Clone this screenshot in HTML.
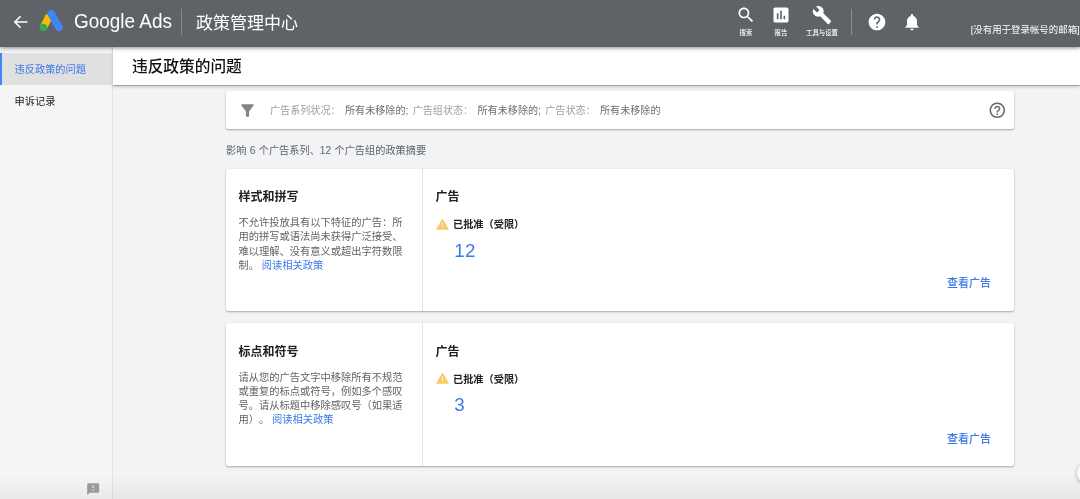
<!DOCTYPE html>
<html lang="zh-CN">
<head>
<meta charset="utf-8">
<title>政策管理中心</title>
<style>
*{box-sizing:border-box;margin:0;padding:0}
html,body{width:1080px;height:499px;overflow:hidden}
body{position:relative;text-spacing-trim:space-all;background:#f1f3f4;font-family:"Liberation Sans","Noto Sans CJK SC",sans-serif;color:#202124}
.abs{position:absolute}
#hdr{left:0;top:0;width:1080px;height:47px;background:#5f6368;box-shadow:0 1px 4px rgba(0,0,0,.45);z-index:10}
#hdr .t{position:absolute;color:#fff;white-space:nowrap}
#side{left:0;top:46px;width:113px;height:453px;background:#f5f5f5;border-right:1px solid #e0e0e0;z-index:2}
#side .act{position:absolute;left:0;top:7px;width:112px;height:32px;background:#e0e0e0;border-left:2px solid #4285f4}
#side .it{position:absolute;left:14.6px;font-size:10.2px;white-space:nowrap}
#titlebar{left:113px;top:47px;width:967px;height:38px;background:#fff;box-shadow:0 1px 0 rgba(0,0,0,.22),0 2px 3px rgba(0,0,0,.18);z-index:3}
#titlebar .t{position:absolute;left:19px;top:7px;font-size:15.7px;font-weight:500;color:#111;white-space:nowrap}
.card{position:absolute;background:#fff;border-radius:2px;box-shadow:0 1px 2px rgba(0,0,0,.3),0 0 1px rgba(0,0,0,.15)}
.txt{position:absolute;white-space:nowrap}
.lab{top:28.8px;font-size:6.4px;line-height:8px;text-align:center;font-weight:500}
.card .div{position:absolute;left:196px;top:0;width:1px;height:100%;background:#e4e4e4}
.card .h{position:absolute;top:20.5px;font-size:12px;line-height:16px;font-weight:700;color:#202124;white-space:nowrap}
.card .desc{position:absolute;left:12.5px;top:47.6px;font-size:10.25px;line-height:14.2px;color:#5f6368;white-space:nowrap}
.card .desc a,.lnk{color:#3b78e7;text-decoration:none}
.card .st{position:absolute;left:227px;top:49.6px;font-size:10.2px;line-height:14px;font-weight:700;color:#202124;white-space:nowrap}
.card .num{position:absolute;left:228.2px;top:71px;font-size:18.7px;letter-spacing:.4px;line-height:22px;color:#3b78e7;white-space:nowrap}
.card .view{position:absolute;left:721px;top:107px;font-size:11px;line-height:16px;font-weight:500;color:#3b78e7;white-space:nowrap}
.card .warn{position:absolute;left:210px;top:49.3px}
</style>
</head>
<body>
<div id="root" style="position:absolute;left:0;top:0;width:1080px;height:499px;will-change:transform">
<div id="hdr" class="abs">
  <svg class="abs" style="left:13px;top:13px" width="16" height="18" viewBox="0 0 16 18"><path d="M14.5 9H2.2M7.6 3.2L1.8 9l5.8 5.8" fill="none" stroke="#fff" stroke-width="1.6"/></svg>
  <svg class="abs" style="left:38px;top:9px" width="26" height="24" viewBox="0 0 26 24">
    <path d="M11.5 6.8L5.3 18.5" stroke="#fbbc04" stroke-width="7.5" stroke-linecap="butt" fill="none"/>
    <path d="M13.2 4.7L21 18.5" stroke="#4285f4" stroke-width="7.5" stroke-linecap="round" fill="none"/>
    <circle cx="5.3" cy="18.5" r="3.75" fill="#34a853"/>
  </svg>
  <div class="t" style="left:74px;top:9px;font-size:21px;transform-origin:0 50%;transform:scaleX(.902)">Google Ads</div>
  <div class="abs" style="left:181px;top:9px;width:1px;height:26px;background:#85888c"></div>
  <div class="t" style="left:196px;top:9px;font-size:17px">政策管理中心</div>

  <svg class="abs" style="left:736px;top:5.4px" width="20" height="20" viewBox="0 0 24 24"><path fill="#fff" d="M15.5 14h-.79l-.28-.27C15.41 12.59 16 11.11 16 9.5 16 5.91 13.09 3 9.5 3S3 5.91 3 9.5 5.91 16 9.5 16c1.61 0 3.09-.59 4.23-1.57l.27.28v.79l5 4.99L20.49 19l-4.99-5zm-6 0C7.01 14 5 11.99 5 9.5S7.01 5 9.5 5 14 7.01 14 9.5 11.99 14 9.5 14z"/></svg>
  <div class="t lab" style="left:726px;width:40px">搜索</div>
  <svg class="abs" style="left:771px;top:5px" width="20" height="20" viewBox="0 0 24 24"><path fill="#fff" d="M19 3H5c-1.1 0-2 .9-2 2v14c0 1.1.9 2 2 2h14c1.1 0 2-.9 2-2V5c0-1.1-.9-2-2-2zM9 17H7v-7h2v7zm4 0h-2V7h2v10zm4 0h-2v-4h2v4z"/></svg>
  <div class="t lab" style="left:761px;width:40px">报告</div>
  <svg class="abs" style="left:812px;top:5px" width="20" height="20" viewBox="0 0 24 24"><path fill="#fff" d="M22.7 19l-9.1-9.1c.9-2.3.4-5-1.5-6.9-2-2-5-2.4-7.4-1.3L9 6 6 9 1.6 4.7C.4 7.1.9 10.1 2.9 12.1c1.9 1.9 4.6 2.4 6.9 1.5l9.1 9.1c.4.4 1 .4 1.4 0l2.3-2.3c.5-.4.5-1.1.1-1.4z"/></svg>
  <div class="t lab" style="left:797px;width:50px">工具与设置</div>
  <div class="abs" style="left:851px;top:9px;width:1px;height:26px;background:#8b8e92"></div>
  <svg class="abs" style="left:867px;top:12px" width="20" height="20" viewBox="0 0 24 24"><path fill="#fff" d="M12 2C6.48 2 2 6.48 2 12s4.48 10 10 10 10-4.48 10-10S17.52 2 12 2zm1 17h-2v-2h2v2zm2.07-7.750l-.9.92C13.45 12.9 13 13.5 13 15h-2v-.5c0-1.1.45-2.1 1.17-2.830l1.240-1.260c.37-.36.59-.86.59-1.410 0-1.1-.9-2-2-2s-2 .9-2 2H8c0-2.210 1.790-4 4-4s4 1.790 4 4c0 .88-.36 1.680-.93 2.250z"/></svg>
  <svg class="abs" style="left:901.5px;top:11.5px" width="20" height="20" viewBox="0 0 24 24"><path fill="#fff" d="M12 22c1.100 0 2-.9 2-2h-4c0 1.100.89 2 2 2zm6-6v-5c0-3.070-1.640-5.640-4.500-6.320V4c0-.83-.67-1.500-1.500-1.500s-1.500.67-1.500 1.500v.68C7.630 5.360 6 7.920 6 11v5l-2 2v1h16v-1l-2-2z"/></svg>
  <div class="t" style="left:970.7px;top:22.3px;font-size:9.45px">[没有用于登录帐号的邮箱]</div>
</div>
<div id="side" class="abs">
  <div class="act"></div>
  <div class="it" style="top:14.8px;color:#3b78e7">违反政策的问题</div>
  <div class="it" style="top:47px;color:#202124">申诉记录</div>
</div>
<div id="titlebar" class="abs"><div class="t">违反政策的问题</div></div>

<div class="card" style="left:226px;top:91px;width:788px;height:38px">
  <svg class="abs" style="left:12.1px;top:9.5px" width="19" height="19" viewBox="0 0 24 24"><path fill="#858585" d="M4.25 5.61C6.27 8.2 10 13 10 13v6c0 .55.45 1 1 1h2c.55 0 1-.45 1-1v-6s3.72-4.8 5.74-7.39A.998.998 0 0018.95 4H5.04c-.83 0-1.3.95-.79 1.610z"/></svg>
  <div class="txt" style="left:44px;top:12.6px;font-size:10.1px;line-height:14px;color:#9aa0a6;word-spacing:1.5px">广告系列状况： <span style="color:#6b6f73">所有未移除的;</span> 广告组状态： <span style="color:#6b6f73">所有未移除的;</span> 广告状态： <span style="color:#6b6f73">所有未移除的</span></div>
  <svg class="abs" style="left:762.4px;top:9.8px" width="18.6" height="18.6" viewBox="0 0 24 24"><path fill="#666" d="M11 18h2v-2h-2v2zm1-16C6.48 2 2 6.48 2 12s4.48 10 10 10 10-4.48 10-10S17.52 2 12 2zm0 18c-4.41 0-8-3.59-8-8s3.590-8 8-8 8 3.590 8 8-3.590 8-8 8zm0-14c-2.210 0-4 1.790-4 4h2c0-1.100.9-2 2-2s2 .9 2 2c0 2-3 1.750-3 5h2c0-2.250 3-2.500 3-5 0-2.210-1.790-4-4-4z"/></svg>
</div>
<div class="txt" style="left:226px;top:141.5px;font-size:10.2px;word-spacing:.5px;color:#5f6368">影响 6 个广告系列、12 个广告组的政策摘要</div>
<div class="card" style="left:226px;top:168.6px;width:788px;height:142px">
  <div class="div"></div>
  <div class="h" style="left:12.5px">样式和拼写</div>
  <div class="desc">不允许投放具有以下特征的广告：所<br>用的拼写或语法尚未获得广泛接受、<br>难以理解、没有意义或超出字符数限<br>制。 <a>阅读相关政策</a></div>
  <div class="h" style="left:209.5px">广告</div>
  <svg class="warn" width="13" height="12" viewBox="0 0 13 12"><path d="M6.5 1L12.4 11.3H.6z" fill="#f6cc69" stroke="#f6cc69" stroke-width=".8" stroke-linejoin="round"/><path d="M6.05 4.6h.9v3.2h-.9zM6.05 8.8h.9v1h-.9z" fill="#fff" fill-opacity=".9"/></svg>
  <div class="st">已批准（受限）</div>
  <div class="num">12</div>
  <div class="view" style="top:106px">查看广告</div>
</div>
<div class="card" style="left:226px;top:323px;width:788px;height:143px">
  <div class="div"></div>
  <div class="h" style="left:12.5px">标点和符号</div>
  <div class="desc">请从您的广告文字中移除所有不规范<br>或重复的标点或符号，例如多个感叹<br>号。请从标题中移除感叹号（如果适<br>用）。 <a>阅读相关政策</a></div>
  <div class="h" style="left:209.5px">广告</div>
  <svg class="warn" width="13" height="12" viewBox="0 0 13 12"><path d="M6.5 1L12.4 11.3H.6z" fill="#f6cc69" stroke="#f6cc69" stroke-width=".8" stroke-linejoin="round"/><path d="M6.05 4.6h.9v3.2h-.9zM6.05 8.8h.9v1h-.9z" fill="#fff" fill-opacity=".9"/></svg>
  <div class="st">已批准（受限）</div>
  <div class="num">3</div>
  <div class="view" style="top:108px">查看广告</div>
</div>
<svg class="abs" style="left:85.8px;top:482.3px;z-index:4" width="14.4" height="14.4" viewBox="0 0 24 24"><path fill="#9e9e9e" d="M20 2H4c-1.1 0-1.990.9-1.990 2L2 22l4-4h14c1.100 0 2-.9 2-2V4c0-1.100-.9-2-2-2zm-7 12h-2v-2h2v2zm0-4h-2V6h2v4z"/></svg>
<div class="abs" style="left:1077.2px;top:461.5px;width:22px;height:22px;border-radius:50%;background:#fafafa;box-shadow:0 1px 4px rgba(0,0,0,.3);z-index:4"></div>
<div class="abs" style="left:0;top:475px;width:1080px;height:24px;background:linear-gradient(to bottom,rgba(0,0,0,0),rgba(0,0,0,.045));z-index:5;pointer-events:none"></div>
</div>
</body>
</html>
